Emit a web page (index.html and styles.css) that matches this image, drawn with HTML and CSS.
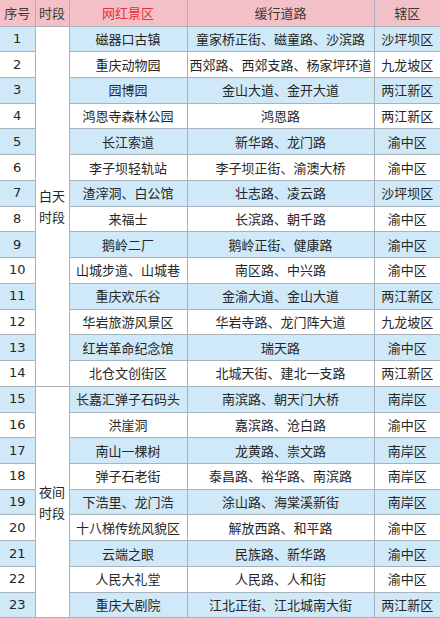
FILE: index.html
```html
<!DOCTYPE html>
<html lang="zh">
<head>
<meta charset="utf-8">
<link rel="stylesheet" href="styles.css">
</head>
<body>
<table class="tbl">
<colgroup>
<col class="c1"><col class="c2"><col class="c3"><col class="c4"><col class="c5">
</colgroup>
<thead>
<tr class="hd"><th>序号</th><th>时段</th><th class="red">网红景区</th><th>缓行道路</th><th>辖区</th></tr>
</thead>
<tbody>
<tr class="b"><td class="n">1</td><td class="seg" rowspan="14">白天<br>时段</td><td>磁器口古镇</td><td>童家桥正街、磁童路、沙滨路</td><td>沙坪坝区</td></tr>
<tr class="w"><td class="n">2</td><td>重庆动物园</td><td>西郊路、西郊支路、杨家坪环道</td><td>九龙坡区</td></tr>
<tr class="b"><td class="n">3</td><td>园博园</td><td>金山大道、金开大道</td><td>两江新区</td></tr>
<tr class="w"><td class="n">4</td><td>鸿恩寺森林公园</td><td>鸿恩路</td><td>两江新区</td></tr>
<tr class="b"><td class="n">5</td><td>长江索道</td><td>新华路、龙门路</td><td>渝中区</td></tr>
<tr class="w"><td class="n">6</td><td>李子坝轻轨站</td><td>李子坝正街、渝澳大桥</td><td>渝中区</td></tr>
<tr class="b"><td class="n">7</td><td>渣滓洞、白公馆</td><td>壮志路、凌云路</td><td>沙坪坝区</td></tr>
<tr class="w"><td class="n">8</td><td>来福士</td><td>长滨路、朝千路</td><td>渝中区</td></tr>
<tr class="b"><td class="n">9</td><td>鹅岭二厂</td><td>鹅岭正街、健康路</td><td>渝中区</td></tr>
<tr class="w"><td class="n">10</td><td>山城步道、山城巷</td><td>南区路、中兴路</td><td>渝中区</td></tr>
<tr class="b"><td class="n">11</td><td>重庆欢乐谷</td><td>金渝大道、金山大道</td><td>两江新区</td></tr>
<tr class="w"><td class="n">12</td><td>华岩旅游风景区</td><td>华岩寺路、龙门阵大道</td><td>九龙坡区</td></tr>
<tr class="b"><td class="n">13</td><td>红岩革命纪念馆</td><td>瑞天路</td><td>渝中区</td></tr>
<tr class="w"><td class="n">14</td><td>北仓文创街区</td><td>北城天街、建北一支路</td><td>两江新区</td></tr>
<tr class="b"><td class="n">15</td><td class="seg" rowspan="9">夜间<br>时段</td><td>长嘉汇弹子石码头</td><td>南滨路、朝天门大桥</td><td>南岸区</td></tr>
<tr class="w"><td class="n">16</td><td>洪崖洞</td><td>嘉滨路、沧白路</td><td>渝中区</td></tr>
<tr class="b"><td class="n">17</td><td>南山一棵树</td><td>龙黄路、崇文路</td><td>南岸区</td></tr>
<tr class="w"><td class="n">18</td><td>弹子石老街</td><td>泰昌路、裕华路、南滨路</td><td>南岸区</td></tr>
<tr class="b"><td class="n">19</td><td>下浩里、龙门浩</td><td>涂山路、海棠溪新街</td><td>南岸区</td></tr>
<tr class="w"><td class="n">20</td><td>十八梯传统风貌区</td><td>解放西路、和平路</td><td>渝中区</td></tr>
<tr class="b"><td class="n">21</td><td>云端之眼</td><td>民族路、新华路</td><td>渝中区</td></tr>
<tr class="w"><td class="n">22</td><td>人民大礼堂</td><td>人民路、人和街</td><td>渝中区</td></tr>
<tr class="b"><td class="n">23</td><td>重庆大剧院</td><td>江北正街、江北城南大街</td><td>两江新区</td></tr>
</tbody>
</table>
</body>
</html>
```
FILE: styles.css
```css
html, body {
  margin: 0;
  padding: 0;
  background: #ffffff;
}
.tbl {
  border-collapse: collapse;
  table-layout: fixed;
  width: 440px;
  font-family: "Noto Sans CJK SC", "Noto Sans", sans-serif;
  font-size: 13px;
  color: #262626;
}
.c1 { width: 35px; }
.c2 { width: 34px; }
.c3 { width: 118px; }
.c4 { width: 187px; }
.c5 { width: 66px; }
.tbl th, .tbl td {
  border: 1px solid #a7b2bb;
  text-align: center;
  vertical-align: middle;
  padding: 0;
  white-space: nowrap;
  overflow: hidden;
  line-height: 16px;
}
.tbl th {
  font-weight: normal;
  color: #3a3a3a;
  background: #f4c0c8;
}
.tbl th.red {
  color: #e2303c;
}
.hd { height: 26px; }
.tbl tbody tr { height: 25.74px; }
.b td { background: #cfe9f8; }
.w td { background: #ffffff; }
.tbl td.n {
  font-family: "DejaVu Sans", "Noto Sans", sans-serif;
  font-size: 13px;
}
.tbl td.seg {
  background: #ffffff;
  line-height: 21px;
  color: #262626;
}
.tbl tr > :first-child { border-left: none; }
.tbl tr > :last-child { border-right: none; }
.hd th { border-top: none; }
```
